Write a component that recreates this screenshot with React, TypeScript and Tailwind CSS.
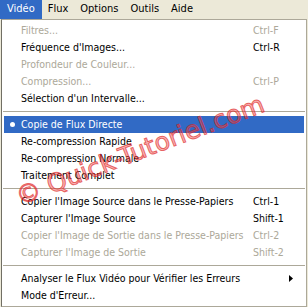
type Row =
  | { kind: "sep" }
  | {
      kind: "item";
      label: string;
      shortcut?: string;
      disabled?: boolean;
      active?: boolean;
      bullet?: boolean;
      submenu?: boolean;
    };

const rows: Row[] = [
  { kind: "item", label: "Filtres...", shortcut: "Ctrl-F", disabled: true },
  { kind: "item", label: "Fréquence d'Images...", shortcut: "Ctrl-R" },
  { kind: "item", label: "Profondeur de Couleur...", disabled: true },
  { kind: "item", label: "Compression...", shortcut: "Ctrl-P", disabled: true },
  { kind: "item", label: "Sélection d'un Intervalle..." },
  { kind: "sep" },
  { kind: "item", label: "Copie de Flux Directe", active: true, bullet: true },
  { kind: "item", label: "Re-compression Rapide" },
  { kind: "item", label: "Re-compression Normale" },
  { kind: "item", label: "Traitement Complet" },
  { kind: "sep" },
  { kind: "item", label: "Copier l'Image Source dans le Presse-Papiers", shortcut: "Ctrl-1" },
  { kind: "item", label: "Capturer l'Image Source", shortcut: "Shift-1" },
  {
    kind: "item",
    label: "Copier l'Image de Sortie dans le Presse-Papiers",
    shortcut: "Ctrl-2",
    disabled: true,
  },
  { kind: "item", label: "Capturer l'Image de Sortie", shortcut: "Shift-2", disabled: true },
  { kind: "sep" },
  { kind: "item", label: "Analyser le Flux Vidéo pour Vérifier les Erreurs", submenu: true },
  { kind: "item", label: "Mode d'Erreur..." },
];

const menus = ["Vidéo", "Flux", "Options", "Outils", "Aide"];

export default function App() {
  return (
    <div
      className="relative w-[308px] h-[307px] overflow-hidden bg-[#ECE9D8] text-[10.5px] text-black"
      style={{ fontFamily: "Tahoma, 'DejaVu Sans Condensed', 'Liberation Sans', sans-serif" }}
    >
      <div className="flex h-[19px] items-center text-[11px]">
        {menus.map((m, i) => (
          <div
            key={m}
            className={
              i === 0
                ? "h-full flex items-center px-[7px] bg-[#316AC5] text-white"
                : "h-full flex items-center px-[6px]"
            }
          >
            {m}
          </div>
        ))}
      </div>

      <div className="ml-[1px] w-[306px] border border-[#ACA899] border-l-[#716F64] bg-white py-[2px]">
        {rows.map((r, i) =>
          r.kind === "sep" ? (
            <div key={i} className="h-[9px] flex items-center px-[1px]">
              <div className="h-px w-full bg-[#ACA899]" />
            </div>
          ) : (
            <div
              key={i}
              className={
                "relative mx-[2px] h-[17px] flex items-center pl-[17px] " +
                (r.active ? "bg-[#316AC5] text-white" : r.disabled ? "text-[#ACA899]" : "")
              }
            >
              {r.bullet && (
                <span className="absolute left-[6px] top-[6px] w-[5px] h-[5px] rounded-full bg-white" />
              )}
              <span className="flex-1 whitespace-nowrap">{r.label}</span>
              <span className="w-[51px] whitespace-nowrap">{r.shortcut}</span>
              {r.submenu && (
                <svg
                  className="absolute left-[285px] top-[5px]"
                  width="4"
                  height="7"
                  viewBox="0 0 4 7"
                >
                  <path d="M0 0 L4 3.5 L0 7 Z" fill="#000" />
                </svg>
              )}
            </div>
          )
        )}
      </div>

      {/* watermark */}
      <div
        className="absolute left-[17px] top-[185px] leading-none whitespace-nowrap text-[25px] text-[rgba(240,80,80,0.45)] pointer-events-none origin-left"
        style={{
          fontFamily: "Verdana, 'DejaVu Sans', sans-serif",
          transform: "rotate(-21deg)",
          WebkitTextStroke: "1px rgba(220,30,30,0.65)",
        }}
      >
        © Quick-Tutoriel.com
      </div>
    </div>
  );
}
